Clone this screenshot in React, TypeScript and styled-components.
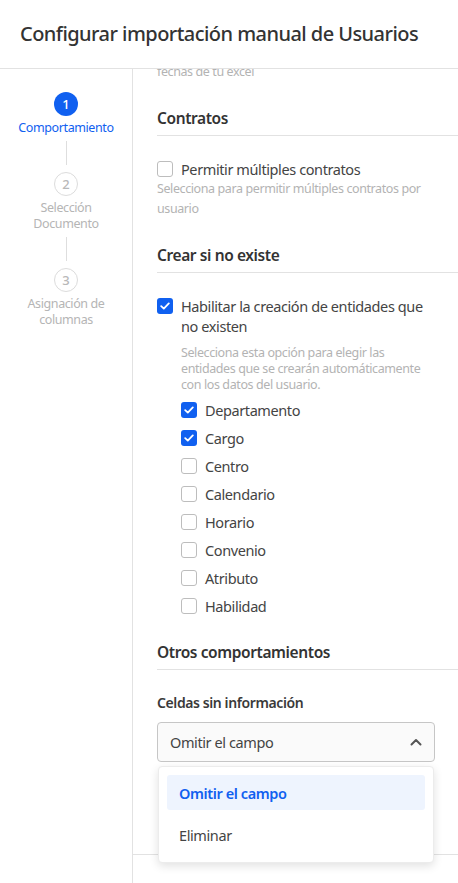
import React from "react";
import styled, { createGlobalStyle } from "styled-components";

const GlobalStyle = createGlobalStyle`
  html, body { margin: 0; padding: 0; background: #fff; }
  body { font-family: "Noto Sans", "Open Sans", sans-serif; color: #333; letter-spacing: -0.4px; }
  * { box-sizing: border-box; }
`;

const BLUE = "#1060f0";

const Page = styled.div`
  width: 458px;
  height: 883px;
  display: flex;
  flex-direction: column;
  overflow: hidden;
`;

const Header = styled.header`
  position: relative;
  z-index: 3;
  background: #fff;
  height: 69px;
  flex: 0 0 69px;
  display: flex;
  align-items: center;
  padding-left: 20px;
  padding-bottom: 2px;
  border-bottom: 1px solid #e2e2e2;
  font-size: 20px;
  font-weight: 500;
  color: #333;
  letter-spacing: -0.55px;
`;

const Body = styled.div`
  flex: 1;
  display: flex;
  min-height: 0;
`;

const Sidebar = styled.nav`
  width: 133px;
  flex: 0 0 133px;
  border-right: 1px solid #e2e2e2;
  padding-top: 23px;
  display: flex;
  flex-direction: column;
  align-items: center;
`;

const Step = styled.div`
  display: flex;
  flex-direction: column;
  align-items: center;
`;

const StepCircle = styled.div<{ $active?: boolean }>`
  width: 24px;
  height: 24px;
  border-radius: 50%;
  display: flex;
  align-items: center;
  justify-content: center;
  font-size: 13px;
  font-weight: 500;
  letter-spacing: 0;
  background: ${(p) => (p.$active ? BLUE : "#fff")};
  color: ${(p) => (p.$active ? "#fff" : "#b8b8b8")};
  border: ${(p) => (p.$active ? "none" : "1px solid #dcdcdc")};
`;

const StepLabel = styled.div<{ $active?: boolean }>`
  margin-top: 4px;
  font-size: 12.5px;
  line-height: 16px;
  text-align: center;
  color: ${(p) => (p.$active ? BLUE : "#b5b5b5")};
`;

const Connector = styled.div`
  width: 1px;
  height: 24px;
  margin: 5px 0 7px;
  background: #dedede;
`;

const Main = styled.main`
  flex: 1;
  display: flex;
  flex-direction: column;
  min-width: 0;
`;

const Scroll = styled.div`
  flex: 1;
  position: relative;
`;

const Content = styled.div`
  margin-top: -5px;
  padding: 0 23px 0 24px;
`;

const Helper = styled.div<{ $lh?: number; $indent?: boolean; $top?: number }>`
  font-size: 12.5px;
  line-height: ${(p) => p.$lh ?? 16}px;
  color: #b3b3b3;
  margin-top: ${(p) => p.$top ?? 0}px;
  padding-left: ${(p) => (p.$indent ? "24px" : "0")};
`;

const SectionTitle = styled.h2<{ $top: number }>`
  margin: ${(p) => p.$top}px -23px 0 0;
  padding-bottom: 7px;
  border-bottom: 1px solid #e2e2e2;
  font-size: 15.5px;
  line-height: 20px;
  font-weight: 600;
  color: #333;
`;

const CheckRow = styled.label<{ $top: number; $size?: number }>`
  display: flex;
  align-items: flex-start;
  gap: 8px;
  margin-top: ${(p) => p.$top}px;
  font-size: ${(p) => p.$size ?? 14.5}px;
  line-height: 20px;
  color: #444;
`;

const Box = styled.span<{ $checked?: boolean }>`
  flex: 0 0 16px;
  width: 16px;
  height: 16px;
  margin-top: 2px;
  border-radius: 3px;
  display: flex;
  align-items: center;
  justify-content: center;
  background: ${(p) => (p.$checked ? BLUE : "#fff")};
  border: ${(p) => (p.$checked ? "none" : "1px solid #bdbdbd")};
`;

const SubList = styled.div`
  margin-top: 7px;
  padding-left: 24px;
  display: flex;
  flex-direction: column;
  gap: 8px;
`;

const FieldLabel = styled.div`
  margin-top: 23px;
  font-size: 14px;
  line-height: 20px;
  font-weight: 600;
  color: #3a3a3a;
`;

const SelectWrap = styled.div`
  position: relative;
  margin-top: 9px;
`;

const SelectBox = styled.div`
  height: 40px;
  border: 1px solid #c6c6c6;
  border-radius: 4px;
  background: #fafafa;
  display: flex;
  align-items: center;
  justify-content: space-between;
  padding: 0 12px 0 12px;
  font-size: 14.5px;
  color: #444;
`;

const Menu = styled.div`
  position: absolute;
  left: 1px;
  right: 1px;
  top: 44px;
  background: #fff;
  border: 1px solid #ececec;
  border-radius: 4px;
  box-shadow: 0 3px 10px rgba(0, 0, 0, 0.12);
  padding: 8px 8px 10px;
  display: flex;
  flex-direction: column;
  gap: 7px;
  z-index: 2;
`;

const MenuItem = styled.div<{ $selected?: boolean }>`
  height: 35px;
  border-radius: 3px;
  display: flex;
  align-items: center;
  padding-left: 12px;
  font-size: 14.5px;
  font-weight: ${(p) => (p.$selected ? 600 : 400)};
  color: ${(p) => (p.$selected ? BLUE : "#444")};
  background: ${(p) => (p.$selected ? "#eef4fe" : "transparent")};
`;

const Footer = styled.footer`
  flex: 0 0 29px;
  border-top: 1px solid #e2e2e2;
`;

const Check = () => (
  <svg width="10" height="8" viewBox="0 0 10 8" fill="none">
    <polyline points="1.2,4.2 3.8,6.6 8.8,1.4" stroke="#fff" strokeWidth="1.8" strokeLinecap="round" strokeLinejoin="round" />
  </svg>
);

const Chevron = () => (
  <svg width="12" height="8" viewBox="0 0 12 8" fill="none">
    <polyline points="1.5,6.5 6,2 10.5,6.5" stroke="#555" strokeWidth="2" strokeLinecap="round" strokeLinejoin="round" />
  </svg>
);

const Checkbox = ({ checked }: { checked?: boolean }) => (
  <Box $checked={checked}>{checked && <Check />}</Box>
);

const entities: [string, boolean][] = [
  ["Departamento", true],
  ["Cargo", true],
  ["Centro", false],
  ["Calendario", false],
  ["Horario", false],
  ["Convenio", false],
  ["Atributo", false],
  ["Habilidad", false],
];

export default function App() {
  return (
    <Page>
      <GlobalStyle />
      <Header>Configurar importación manual de Usuarios</Header>
      <Body>
        <Sidebar>
          <Step>
            <StepCircle $active>1</StepCircle>
            <StepLabel $active>Comportamiento</StepLabel>
          </Step>
          <Connector />
          <Step>
            <StepCircle>2</StepCircle>
            <StepLabel>
              Selección
              <br />
              Documento
            </StepLabel>
          </Step>
          <Connector />
          <Step>
            <StepCircle>3</StepCircle>
            <StepLabel>
              Asignación de
              <br />
              columnas
            </StepLabel>
          </Step>
        </Sidebar>
        <Main>
          <Scroll>
            <Content>
              <Helper>fechas de tu excel</Helper>

              <SectionTitle $top={28}>Contratos</SectionTitle>
              <CheckRow $top={23}>
                <Checkbox />
                <span>Permitir múltiples contratos</span>
              </CheckRow>
              <Helper $lh={20}>Selecciona para permitir múltiples contratos por usuario</Helper>

              <SectionTitle $top={26}>Crear si no existe</SectionTitle>
              <CheckRow $top={23}>
                <Checkbox checked />
                <span>Habilitar la creación de entidades que no existen</span>
              </CheckRow>
              <Helper $indent $top={9}>
                Selecciona esta opción para elegir las entidades que se crearán automáticamente con los datos del usuario.
              </Helper>
              <SubList>
                {entities.map(([name, checked]) => (
                  <CheckRow key={name} $top={0}>
                    <Checkbox checked={checked} />
                    <span>{name}</span>
                  </CheckRow>
                ))}
              </SubList>

              <SectionTitle $top={26}>Otros comportamientos</SectionTitle>
              <FieldLabel>Celdas sin información</FieldLabel>
              <SelectWrap>
                <SelectBox>
                  <span>Omitir el campo</span>
                  <Chevron />
                </SelectBox>
                <Menu>
                  <MenuItem $selected>Omitir el campo</MenuItem>
                  <MenuItem>Eliminar</MenuItem>
                </Menu>
              </SelectWrap>
            </Content>
          </Scroll>
          <Footer />
        </Main>
      </Body>
    </Page>
  );
}
